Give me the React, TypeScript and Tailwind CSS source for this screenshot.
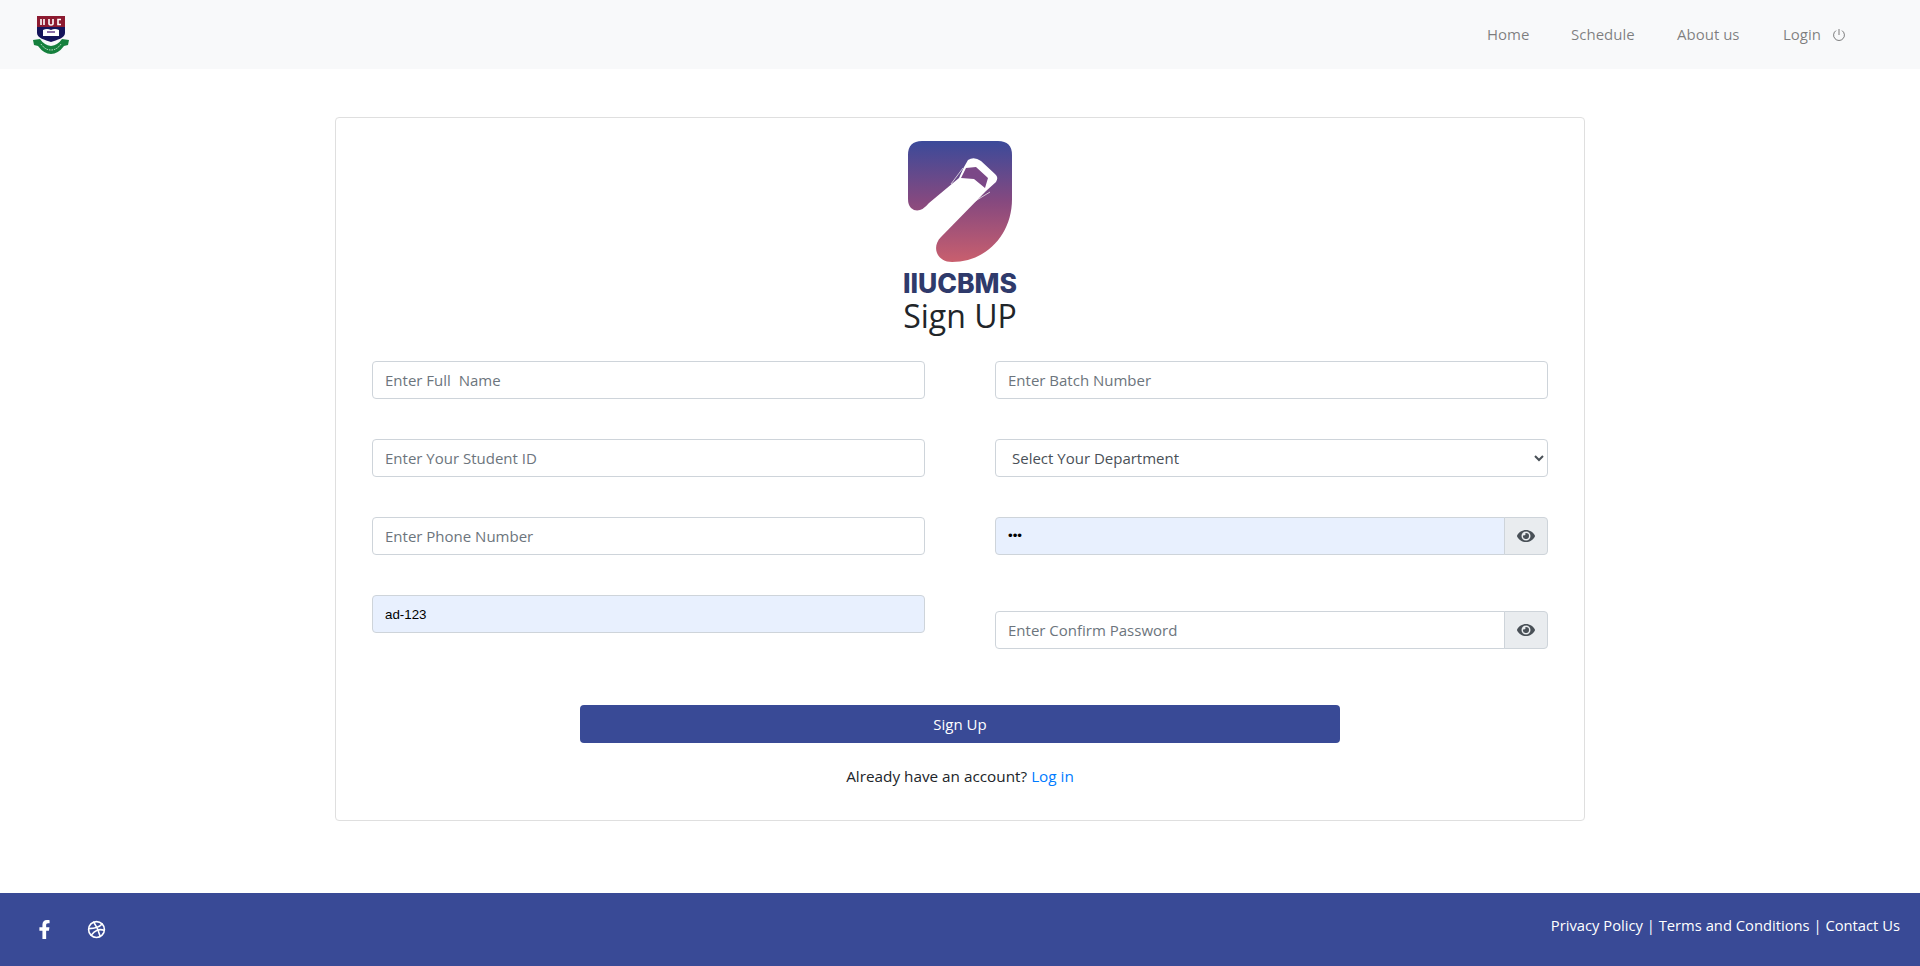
import { FaEye, FaFacebookF } from 'react-icons/fa';
import { FiDribbble } from 'react-icons/fi';

const font = "font-['Open_Sans','Noto_Sans',sans-serif]";
const filledText = "bg-[#e8f0fe] text-black text-[13.33px] font-['Liberation_Sans',sans-serif]";
const emptyText = `bg-white text-[15px] ${font}`;

function Crest() {
  return (
    <svg width="36" height="38" viewBox="0 0 36 38">
      <path d="M4 0H32V17C32 22 24 24 18 26C12 24 4 22 4 17Z" fill="#14145a" />
      <rect x="4" y="0" width="28" height="11" fill="#8c1a30" />
      <path d="M8 3V9M11 3V9M16 3V8Q16 9 18 9Q20 9 20 8V3M28 3.5H25V8.5H28" stroke="#fff" strokeWidth="1.6" fill="none" />
      <path d="M10 14Q14 12 18 14Q22 12 26 14V20H10Z" fill="#fff" />
      <path d="M14 16H22" stroke="#8a6fa8" strokeWidth="2" />
      <path d="M0 24L7 23Q11 29 18 30Q25 29 29 23L36 24L35 29L31 30Q25 38 18 38Q11 38 5 30L1 29Z" fill="#15803d" />
      <path d="M8 28Q12 34 18 34Q24 34 28 28" stroke="#cfe8d4" strokeWidth="1" strokeDasharray="1.5 1" fill="none" />
    </svg>
  );
}

function BusLogo() {
  return (
    <svg width="105" height="121" viewBox="0 0 105 121">
      <defs>
        <linearGradient id="busgrad" x1="0" y1="0" x2="0" y2="1">
          <stop offset="0" stopColor="#3b4a9a" />
          <stop offset="0.5" stopColor="#86497f" />
          <stop offset="1" stopColor="#c95f6e" />
        </linearGradient>
      </defs>
      <path
        d="M14 0H90Q104 0 104 14V58C104 94 78 121 44 121C29 121 23 106 33 96L78 50L88 41Q91 36 87 33L73 20Q66 15 60 19L56 26L51 37L21 62Q11 74 3 67Q0 64 0 58V14Q0 0 14 0Z"
        fill="url(#busgrad)"
      />
      <path d="M58 27L68 26L80 37L77 47L66 38L53 37Z" fill="#7b4887" />
      <path d="M43 43L55 27M64 62L82 51" stroke="#fff" strokeWidth="1" strokeOpacity="0.7" fill="none" />
    </svg>
  );
}

function Field({ placeholder, value, filled }: { placeholder?: string; value?: string; filled?: boolean }) {
  return (
    <input
      type="text"
      placeholder={placeholder}
      defaultValue={value}
      className={`${filled ? filledText : emptyText} block w-full h-[38px] px-3 border border-[#ced4da] rounded-[4px] outline-none placeholder:text-[#6c757d]`}
    />
  );
}

function PasswordField({ placeholder, value, filled }: { placeholder?: string; value?: string; filled?: boolean }) {
  return (
    <div className="flex w-full h-[38px]">
      <input
        type="password"
        placeholder={placeholder}
        defaultValue={value}
        className={`${filled ? filledText : emptyText} flex-1 min-w-0 px-3 border border-[#ced4da] rounded-l-[4px] outline-none placeholder:text-[#6c757d]`}
      />
      <span className="w-[44px] -ml-px flex items-center justify-center bg-[#e9ecef] border border-[#ced4da] rounded-r-[4px] text-[#495057]">
        <FaEye size={18} />
      </span>
    </div>
  );
}

export default function App() {
  return (
    <div className={`${font} min-h-[966px] flex flex-col bg-white text-[#212529] text-[15px]`}>
      <nav className="h-[69px] bg-[#f8f9fa] flex items-center justify-between pl-[33px] pr-[74px]">
        <Crest />
        <div className="flex items-center text-[#00000080]">
          <a className="w-[84px]">Home</a>
          <a className="w-[106px]">Schedule</a>
          <a className="w-[106px]">About us</a>
          <a className="flex items-center gap-[11px]">
            Login
            <svg width="14" height="14" viewBox="0 0 14 14" fill="none" stroke="currentColor" strokeWidth="1">
              <path d="M7 1V7M4 2.6A5.4 5.4 0 1 0 10 2.6" />
            </svg>
          </a>
        </div>
      </nav>

      <main className="flex-1 pt-[48px]">
        <div className="mx-auto w-[1250px] h-[704px] border border-[#dfdfdf] rounded-[4px] px-9 pt-[23px]">
          <div className="flex flex-col items-center">
            <BusLogo />
            <div className="font-['Inter',sans-serif] font-extrabold text-[26.5px] leading-[28px] mt-[7px] text-[#2f3a6b]">IIUCBMS</div>
            <h2 className="text-[32px] leading-[38px] font-normal">Sign UP</h2>
          </div>

          <div className="grid grid-cols-2 gap-x-[70px] mt-[26px]">
            <div className="flex flex-col gap-10">
              <Field placeholder="Enter Full  Name" />
              <Field placeholder="Enter Your Student ID" />
              <Field placeholder="Enter Phone Number" />
              <Field value="ad-123" filled />
            </div>
            <div className="flex flex-col">
              <Field placeholder="Enter Batch Number" />
              <select className={`${font} block w-full h-[38px] px-3 mt-10 text-[15px] text-[#495057] bg-white border border-[#ced4da] rounded-[4px] outline-none`}>
                <option>Select Your Department</option>
              </select>
              <div className="mt-10"><PasswordField value="abc" filled /></div>
              <div className="mt-14"><PasswordField placeholder="Enter Confirm Password" /></div>
            </div>
          </div>

          <button className="block mx-auto mt-14 w-[760px] h-[38px] bg-[#394a96] text-white rounded-[4px]">Sign Up</button>
          <p className="text-center mt-[21px] leading-6 text-[15.3px]">
            Already have an account? <a className="text-[#007bff]">Log in</a>
          </p>
        </div>
      </main>

      <footer className="h-[73px] bg-[#394a96] flex justify-between pl-[39px] pr-5 text-white">
        <div className="flex items-center gap-[33px] h-full">
          <FaFacebookF size={19} className="-ml-1" />
          <FiDribbble size={19} />
        </div>
        <div className="pt-[20px] leading-6 text-[14.75px]">Privacy Policy | Terms and Conditions | Contact Us</div>
      </footer>
    </div>
  );
}
